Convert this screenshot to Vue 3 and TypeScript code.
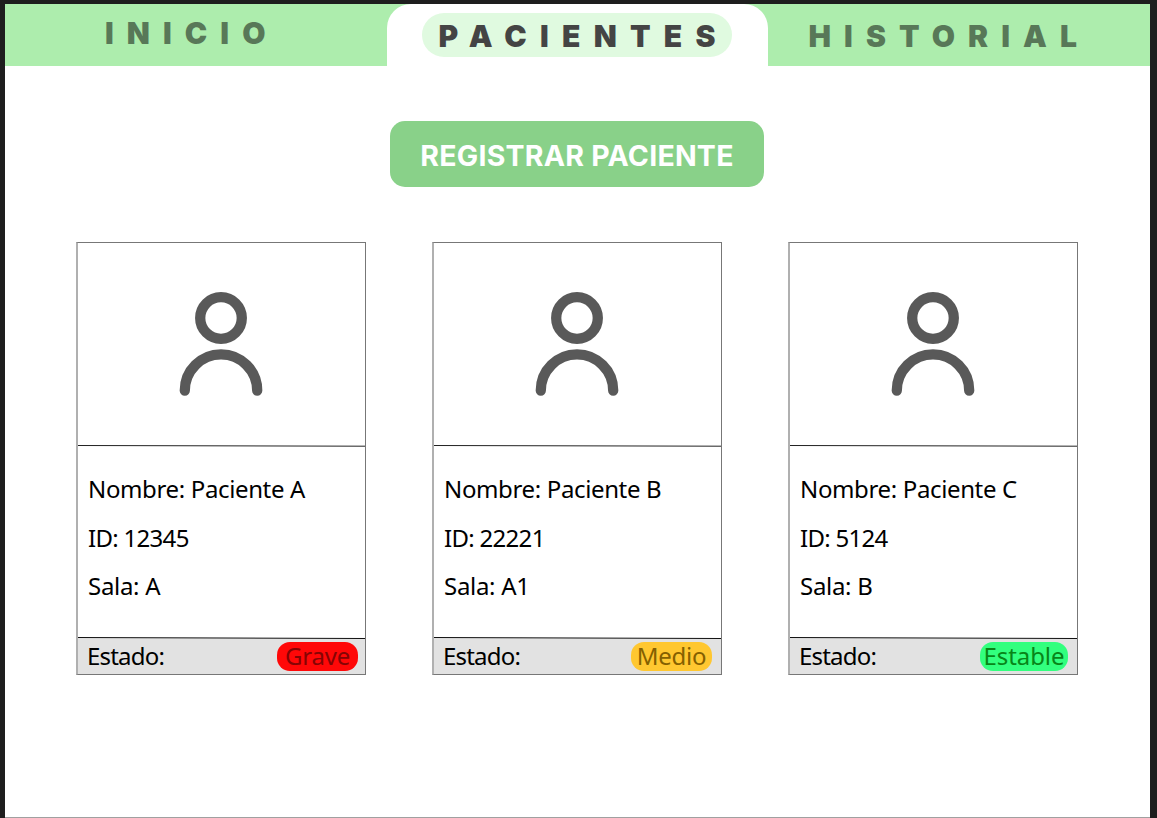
<script setup lang="ts">
interface Patient {
  name: string
  id: string
  room: string
  status: string
  tone: 'severe' | 'medium' | 'stable'
}

const patients: Patient[] = [
  { name: 'Paciente A', id: '12345', room: 'A', status: 'Grave', tone: 'severe' },
  { name: 'Paciente B', id: '22221', room: 'A1', status: 'Medio', tone: 'medium' },
  { name: 'Paciente C', id: '5124', room: 'B', status: 'Estable', tone: 'stable' },
]
</script>

<template>
  <div class="frame">
    <div class="page">
      <nav class="nav">
        <a class="tab home">INICIO</a>
        <a class="tab active"><span class="pill">PACIENTES</span></a>
        <a class="tab history">HISTORIAL</a>
      </nav>
      <main class="content">
        <button class="register" type="button">REGISTRAR PACIENTE</button>
        <section class="cards">
          <article v-for="p in patients" :key="p.id" class="card">
            <div class="photo">
              <svg class="avatar" width="84" height="104" viewBox="0 0 84 104" fill="none" stroke="#595959" stroke-width="10.3" stroke-linecap="round">
                <circle cx="42" cy="26" r="20.8" />
                <path d="M5.8 98.6a36.2 36.2 0 0 1 72.4 0" />
              </svg>
            </div>
            <svg class="rule" width="287" height="2" viewBox="0 0 287 2"><path d="M0 .5L287 1.2" stroke="#222" stroke-width="1" /></svg>
            <div class="details">
              <p class="name">Nombre: {{ p.name }}</p>
              <p class="code">ID: {{ p.id }}</p>
              <p class="room">Sala: {{ p.room }}</p>
            </div>
            <svg class="rule shaded" width="287" height="2" viewBox="0 0 287 2"><path d="M0 0H287V1.5L0 .5Z" fill="#fff" /><path d="M0 .5L287 1.5" stroke="#111" stroke-width="1" /></svg>
            <footer class="status">
              <span class="label">Estado:</span>
              <span class="badge" :class="p.tone">{{ p.status }}</span>
            </footer>
          </article>
        </section>
      </main>
    </div>
  </div>
</template>

<style>
body {
  margin: 0;
  background: #1e1e1e;
}
</style>

<style scoped>
.frame {
  box-sizing: border-box;
  width: 1157px;
  height: 818px;
  padding: 4px 7.5px 0 5px;
  background: #1e1e1e;
  overflow: hidden;
}
.page {
  box-sizing: border-box;
  height: 814px;
  background: #fff;
  border-bottom: 1px solid #a0a0a0;
}
.nav {
  display: flex;
  height: 62px;
  background: #adedad;
  font-family: Inter, sans-serif;
  font-size: 30px;
  font-weight: 900;
  line-height: 36px;
}
.tab {
  box-sizing: border-box;
  color: #587858;
  white-space: nowrap;
}
.home {
  width: 381.5px;
  padding: 11px 0 0 100px;
  letter-spacing: 13.1px;
}
.active {
  width: 381.5px;
  padding: 9px 0 0 35.5px;
  background: #fff;
  border-radius: 24px 24px 0 0;
  color: #444;
}
.pill {
  display: block;
  box-sizing: border-box;
  width: 310px;
  height: 44px;
  padding: 5px 0 0 16.5px;
  border-radius: 22px;
  background: #e0fae0;
  letter-spacing: 13.25px;
}
.history {
  padding: 14px 0 0 40.5px;
  letter-spacing: 13.1px;
}
.content {
  display: flex;
  flex-direction: column;
  padding: 55px 0 0 71px;
}
.register {
  width: 374px;
  height: 66px;
  margin: 0 0 55px 314px;
  padding: 3px 0 0;
  border: 0;
  border-radius: 15px;
  background: #89d189;
  color: #fff;
  font: 700 28.5px/34px Inter, sans-serif;
  letter-spacing: 0.23px;
  white-space: nowrap;
}
.cards {
  display: flex;
  gap: 66px;
}
.card {
  box-sizing: border-box;
  width: 290px;
  height: 433px;
  border: 1px solid #777;
  border-left: 2px solid #b0b0b0;
  font-family: "Noto Sans", sans-serif;
  font-size: 24px;
  color: #000;
}
.photo {
  display: flex;
  justify-content: center;
  height: 202px;
}
.avatar {
  margin: 49px 1px 0 0;
}
.rule {
  display: block;
  width: 287px;
}
.details {
  box-sizing: border-box;
  height: 190px;
  padding: 24px 0 0 10px;
}
.details p {
  margin: 0;
  height: 48.5px;
  line-height: 36px;
  white-space: nowrap;
}
.name {
  letter-spacing: -0.36px;
}
.code {
  letter-spacing: -0.7px;
}
.room {
  letter-spacing: -0.3px;
}
.status {
  display: flex;
  align-items: center;
  justify-content: space-between;
  height: 35px;
  padding: 0 7px 0 9px;
  box-sizing: border-box;
  background: #e2e2e2;
}
.label {
  height: 35px;
  line-height: 33px;
  letter-spacing: -0.8px;
}
.shaded {
  background: #e2e2e2;
}
.badge {
  box-sizing: border-box;
  height: 29px;
  border-radius: 13px;
  line-height: 28px;
  text-align: center;
}
.severe {
  width: 81px;
  background: #ff0808;
  color: #850404;
  letter-spacing: -0.2px;
}
.medium {
  width: 81px;
  margin-right: 2px;
  background: #ffc730;
  color: #856000;
  letter-spacing: -0.3px;
}
.stable {
  width: 88px;
  margin-right: 2px;
  background: #32ff7e;
  color: #088518;
  letter-spacing: -0.1px;
}
</style>
